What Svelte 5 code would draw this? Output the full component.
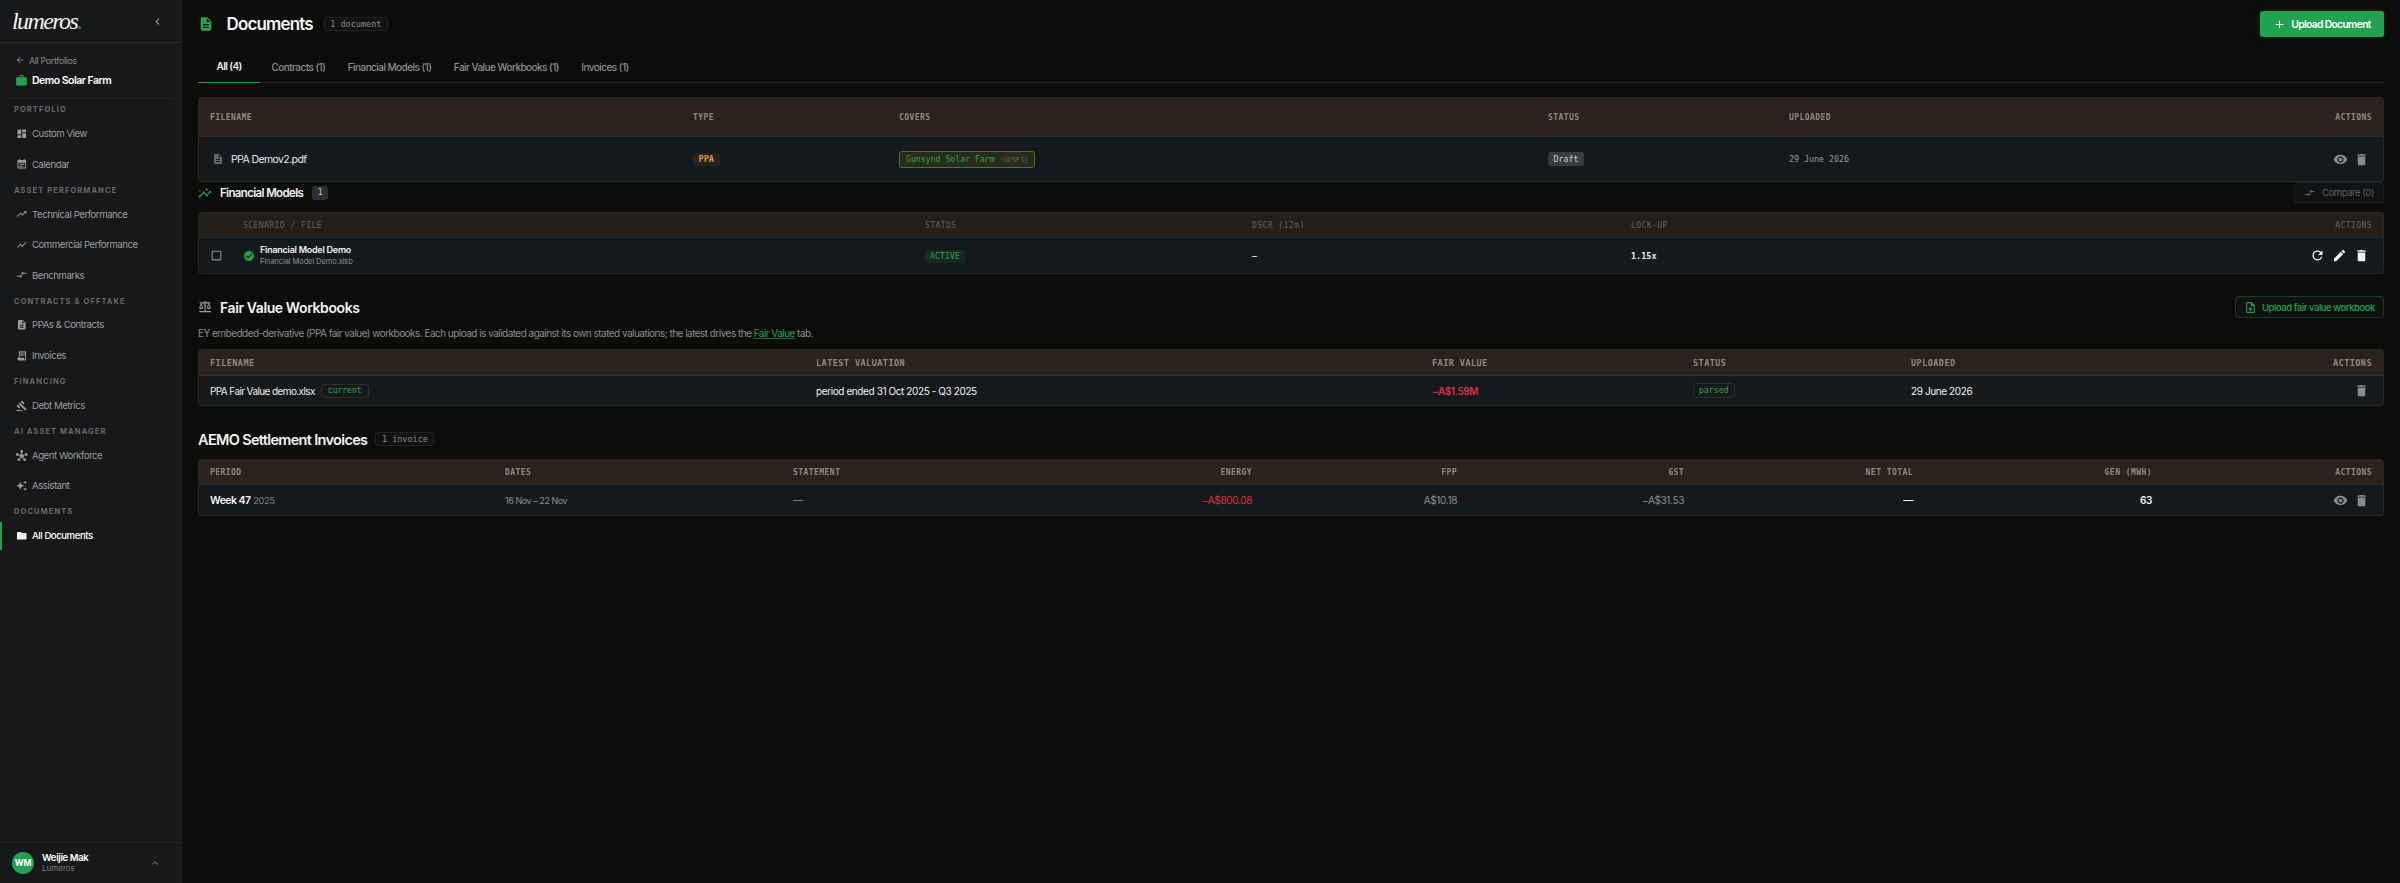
<script>
  const P = {
    left: 'M15.41 7.41 14 6l-6 6 6 6 1.41-1.41L10.83 12z',
    back: 'M20 11H7.83l5.59-5.59L12 4l-8 8 8 8 1.41-1.41L7.83 13H20v-2z',
    work: 'M20 6h-4V4c0-1.11-.89-2-2-2h-4c-1.11 0-2 .89-2 2v2H4c-1.11 0-1.99.89-1.99 2L2 19c0 1.11.89 2 2 2h16c1.11 0 2-.89 2-2V8c0-1.11-.89-2-2-2zm-6 0h-4V4h4v2z',
    dash: 'M3 13h8V3H3v10zm0 8h8v-6H3v6zm10 0h8V11h-8v10zm0-18v6h8V3h-8z',
    cal: 'M19 4h-1V2h-2v2H8V2H6v2H5c-1.1 0-2 .9-2 2v14c0 1.1.9 2 2 2h14c1.1 0 2-.9 2-2V6c0-1.1-.9-2-2-2zm0 16H5V10h14v10zM7 12h10v2H7zm0 4h7v2H7z',
    trend: 'M16 6l2.29 2.29-4.88 4.88-4-4L2 16.59 3.41 18l6-6 4 4 6.3-6.29L22 12V6z',
    chart: 'M3.5 18.49l6-6.01 4 4L22 6.92l-1.41-1.41-7.09 7.97-4-4L2 16.99z',
    insights: 'M21 8c-1.45 0-2.26 1.44-1.93 2.51l-3.55 3.56c-.3-.09-.74-.09-1.04 0l-2.55-2.55C12.27 10.45 11.46 9 10 9c-1.45 0-2.27 1.44-1.93 2.52l-4.56 4.55C2.44 15.74 1 16.55 1 18c0 1.1.9 2 2 2 1.45 0 2.26-1.44 1.93-2.51l4.55-4.56c.3.09.74.09 1.04 0l2.55 2.55C12.73 16.55 13.54 18 15 18c1.45 0 2.27-1.44 1.93-2.52l3.56-3.55C21.56 12.26 23 11.45 23 10c0-1.1-.9-2-2-2zM15 9l.94-2.07L18 6l-2.06-.93L15 3l-.92 2.07L12 6l2.08.93zM3.5 11 4 9l2-.5L4 8l-.5-2L3 8l-2 .5L3 9z',
    cmp: 'M9.01 14H2v2h7.01v3L13 15l-3.99-4v3zm5.98-1v-3H22V8h-7.01V5L11 9l3.99 4z',
    doc: 'M14 2H6c-1.1 0-1.99.9-1.99 2L4 20c0 1.1.89 2 1.99 2H18c1.1 0 2-.9 2-2V8l-6-6zm2 16H8v-2h8v2zm0-4H8v-2h8v2zm-3-5V3.5L18.5 9H13z',
    rcpt: 'M19.5 3.5 18 2l-1.5 1.5L15 2l-1.5 1.5L12 2l-1.5 1.5L9 2 7.5 3.5 6 2v14H3v3c0 1.66 1.34 3 3 3h12c1.66 0 3-1.34 3-3V2l-1.5 1.5zM19 19c0 .55-.45 1-1 1s-1-.45-1-1v-3H8V5h11v14zM9 7h6v2H9zm7 0h2v2h-2zM9 10h6v2H9zm7 0h2v2h-2z',
    gavel: 'M1 21h12v2H1v-2zM5.245 8.07l2.83-2.827 14.14 14.142-2.828 2.828L5.245 8.07zM12.317 1l5.657 5.656-2.83 2.83-5.654-5.66L12.317 1zM3.825 9.485l5.657 5.657-2.828 2.828-5.657-5.657 2.828-2.828z',
    hub: 'M8.4 18.2c.38.5.6 1.12.6 1.8 0 1.66-1.34 3-3 3s-3-1.34-3-3 1.34-3 3-3c.44 0 .85.09 1.23.26l1.41-1.77c-.92-1.03-1.29-2.39-1.09-3.69l-2.03-.68c-.54.83-1.46 1.38-2.52 1.38-1.66 0-3-1.34-3-3s1.34-3 3-3 3 1.34 3 3c0 .07 0 .14-.01.21l2.03.68c.64-1.21 1.82-2.09 3.22-2.32V5.91C9.96 5.57 9 4.4 9 3c0-1.66 1.34-3 3-3s3 1.34 3 3c0 1.4-.96 2.57-2.25 2.91v2.16c1.4.23 2.58 1.11 3.22 2.32l2.03-.68C18 9.64 18 9.57 18 9.5c0-1.66 1.34-3 3-3s3 1.34 3 3-1.34 3-3 3c-1.06 0-1.98-.55-2.52-1.38l-2.03.68c.2 1.29-.16 2.65-1.09 3.69l1.41 1.77c.38-.17.79-.26 1.23-.26 1.66 0 3 1.34 3 3s-1.34 3-3 3-3-1.34-3-3c0-.68.22-1.3.6-1.8l-1.41-1.77c-1.35.75-3.01.76-4.37 0L8.4 18.2z',
    spark: 'M19 9l1.25-2.75L23 5l-2.75-1.25L19 1l-1.25 2.75L15 5l2.75 1.25L19 9zm-7.5.5L9 4 6.5 9.5 1 12l5.5 2.5L9 20l2.5-5.5L17 12l-5.5-2.5zM19 15l-1.25 2.75L15 19l2.75 1.25L19 23l1.25-2.75L23 19l-2.75-1.25L19 15z',
    folder: 'M10 4H4c-1.1 0-1.99.9-1.99 2L2 18c0 1.1.9 2 2 2h16c1.1 0 2-.9 2-2V8c0-1.1-.9-2-2-2h-8l-2-2z',
    add: 'M19 13h-6v6h-2v-6H5v-2h6V5h2v6h6v2z',
    eye: 'M12 4.5C7 4.5 2.73 7.61 1 12c1.73 4.39 6 7.5 11 7.5s9.27-3.11 11-7.5c-1.73-4.39-6-7.5-11-7.5zM12 17c-2.76 0-5-2.24-5-5s2.24-5 5-5 5 2.24 5 5-2.24 5-5 5zm0-8c-1.66 0-3 1.34-3 3s1.34 3 3 3 3-1.34 3-3-1.34-3-3-3z',
    del: 'M6 19c0 1.1.9 2 2 2h8c1.1 0 2-.9 2-2V7H6v12zM19 4h-3.5l-1-1h-5l-1 1H5v2h14V4z',
    refresh: 'M17.65 6.35C16.2 4.9 14.21 4 12 4c-4.42 0-7.99 3.58-7.99 8s3.57 8 7.99 8c3.73 0 6.84-2.55 7.73-6h-2.08c-.82 2.33-3.04 4-5.65 4-3.31 0-6-2.69-6-6s2.69-6 6-6c1.66 0 3.14.69 4.22 1.78L13 11h7V4l-2.35 2.35z',
    edit: 'M3 17.25V21h3.75L17.81 9.94l-3.75-3.75L3 17.25zM20.71 7.04c.39-.39.39-1.02 0-1.41l-2.34-2.34c-.39-.39-1.02-.39-1.41 0l-1.83 1.83 3.75 3.75 1.83-1.83z',
    check: 'M12 2C6.48 2 2 6.48 2 12s4.48 10 10 10 10-4.48 10-10S17.52 2 12 2zm-2 15l-5-5 1.41-1.41L10 14.17l7.59-7.59L19 8l-9 9z',
    box: 'M19 5v14H5V5h14m0-2H5c-1.1 0-2 .9-2 2v14c0 1.1.9 2 2 2h14c1.1 0 2-.9 2-2V5c0-1.1-.9-2-2-2z',
    scale: 'M13 7.83c.85-.3 1.53-.98 1.83-1.83H18l-3 7c0 1.66 1.57 3 3.5 3s3.5-1.34 3.5-3l-3-7h2V4h-6.17c-.41-1.17-1.52-2-2.83-2s-2.42.83-2.83 2H3v2h2l-3 7c0 1.66 1.57 3 3.5 3S9 14.66 9 13L6 6h3.17c.3.85.98 1.53 1.83 1.83V19H2v2h20v-2h-9V7.83zM20.37 13h-3.74l1.87-4.36L20.37 13zm-13 0H3.63L5.5 8.64 7.37 13zM12 6c-.55 0-1-.45-1-1s.45-1 1-1 1 .45 1 1-.45 1-1 1z',
    upload: 'M14 2H6c-1.1 0-1.99.9-1.99 2L4 20c0 1.1.89 2 1.99 2H18c1.1 0 2-.9 2-2V8l-6-6zm4 18H6V4h7v5h5v11zM8 15.01l1.41 1.41L11 14.84V19h2v-4.16l1.59 1.59L16 15.01 12.01 11 8 15.01z',
    up: 'M12 8l-6 6 1.41 1.41L12 10.83l4.59 4.58L18 14z'
  };

  const nav = [
    { label: 'PORTFOLIO', items: [{ t: 'Custom View', i: 'dash' }, { t: 'Calendar', i: 'cal' }] },
    { label: 'ASSET PERFORMANCE', items: [{ t: 'Technical Performance', i: 'trend' }, { t: 'Commercial Performance', i: 'chart' }, { t: 'Benchmarks', i: 'cmp' }] },
    { label: 'CONTRACTS & OFFTAKE', items: [{ t: 'PPAs & Contracts', i: 'doc' }, { t: 'Invoices', i: 'rcpt' }] },
    { label: 'FINANCING', items: [{ t: 'Debt Metrics', i: 'gavel' }] },
    { label: 'AI ASSET MANAGER', items: [{ t: 'Agent Workforce', i: 'hub' }, { t: 'Assistant', i: 'spark' }] },
    { label: 'DOCUMENTS', items: [{ t: 'All Documents', i: 'folder', active: true }] }
  ];
  const tabs = ['All (4)', 'Contracts (1)', 'Financial Models (1)', 'Fair Value Workbooks (1)', 'Invoices (1)'];
</script>

{#snippet icon(name, cls = '')}
  <svg class={'ic ' + cls} viewBox="0 0 24 24" aria-hidden="true"><path d={P[name]} /></svg>
{/snippet}

<div class="app">
  <aside class="side">
    <div class="brand">
      <span class="logo">lumeros<span class="dot">.</span></span>
      {@render icon('left', 'collapse')}
    </div>
    <div class="ctx">
      <div class="backlink">{@render icon('back')}<span>All Portfolios</span></div>
      <div class="farm">{@render icon('work')}<span>Demo Solar Farm</span></div>
    </div>
    <nav class="nav">
      {#each nav as g}
        <div class="glabel">{g.label}</div>
        {#each g.items as it}
          <div class="item" class:active={it.active}>{@render icon(it.i)}<span>{it.t}</span></div>
        {/each}
      {/each}
    </nav>
    <div class="user">
      <div class="avatar">WM</div>
      <div class="who"><div class="name">Weijie Mak</div><div class="org">Lumeros</div></div>
      {@render icon('up')}
    </div>
  </aside>

  <main class="main">
    <header class="head">
      {@render icon('doc', 'headicon')}
      <h1>Documents</h1>
      <span class="pill">1 document</span>
      <button class="primary">{@render icon('add')}Upload Document</button>
    </header>

    <div class="tabs">
      {#each tabs as t, i}
        <div class="tab" class:on={i === 0}>{t}</div>
      {/each}
    </div>

    <section class="tbl t1">
      <div class="row hd">
        <div>FILENAME</div><div>TYPE</div><div>COVERS</div><div>STATUS</div><div>UPLOADED</div><div class="r">ACTIONS</div>
      </div>
      <div class="row bd">
        <div class="file">{@render icon('doc')}<span>PPA Demov2.pdf</span></div>
        <div><span class="tag-ppa">PPA</span></div>
        <div><span class="covers">Gunsynd Solar Farm <em>(GUSF1)</em></span></div>
        <div><span class="draft">Draft</span></div>
        <div class="mono-cell">29 June 2026</div>
        <div class="acts">{@render icon('eye')}{@render icon('del')}</div>
      </div>
    </section>

    <div class="fm-head">
      {@render icon('insights', 'green')}
      <h3>Financial Models</h3>
      <span class="count">1</span>
      <button class="compare">{@render icon('cmp')}Compare (0)</button>
    </div>

    <section class="tbl t2">
      <div class="row hd">
        <div></div><div>SCENARIO / FILE</div><div>STATUS</div><div>DSCR (12m)</div><div>LOCK-UP</div><div class="r">ACTIONS</div>
      </div>
      <div class="row bd">
        <div class="cb">{@render icon('box')}</div>
        <div class="scen">
          {@render icon('check')}
          <div><div class="s1">Financial Model Demo</div><div class="s2">Financial Model Demo.xlsb</div></div>
        </div>
        <div><span class="active-tag">ACTIVE</span></div>
        <div class="white">–</div>
        <div class="lock">1.15x</div>
        <div class="acts bright">{@render icon('refresh')}{@render icon('edit')}{@render icon('del')}</div>
      </div>
    </section>

    <div class="fv-head">
      {@render icon('scale')}
      <h2>Fair Value Workbooks</h2>
      <button class="outline">{@render icon('upload')}Upload fair value workbook</button>
    </div>
    <p class="desc">EY embedded-derivative (PPA fair value) workbooks. Each upload is validated against its own stated valuations; the latest drives the <a href="#fv">Fair Value</a> tab.</p>

    <section class="tbl t3">
      <div class="row hd">
        <div>FILENAME</div><div>LATEST VALUATION</div><div>FAIR VALUE</div><div>STATUS</div><div>UPLOADED</div><div class="r">ACTIONS</div>
      </div>
      <div class="row bd">
        <div class="fvname">PPA Fair Value demo.xlsx <span class="current">current</span></div>
        <div class="white">period ended 31 Oct 2025 - Q3 2025</div>
        <div class="neg strong">−A$1.59M</div>
        <div><span class="parsed">parsed</span></div>
        <div class="white">29 June 2026</div>
        <div class="acts">{@render icon('del')}</div>
      </div>
    </section>

    <div class="inv-head">
      <h2>AEMO Settlement Invoices</h2>
      <span class="pill">1 invoice</span>
    </div>

    <section class="tbl t4">
      <div class="row hd">
        <div>PERIOD</div><div>DATES</div><div>STATEMENT</div><div class="r">ENERGY</div><div class="r">FPP</div><div class="r">GST</div><div class="r">NET TOTAL</div><div class="r">GEN (MWH)</div><div class="r">ACTIONS</div>
      </div>
      <div class="row bd">
        <div class="wk"><b>Week 47</b> <span>2025</span></div>
        <div class="dim date">16 Nov – 22 Nov</div>
        <div class="dim">—</div>
        <div class="r neg">−A$800.08</div>
        <div class="r dim">A$10.18</div>
        <div class="r dim">−A$31.53</div>
        <div class="r white strong">—</div>
        <div class="r white strong">63</div>
        <div class="acts">{@render icon('eye')}{@render icon('del')}</div>
      </div>
    </section>
  </main>
</div>

<style>
  :global(body) { margin: 0; background: #0c0c0b; }
  :global(*) { box-sizing: border-box; }
  .app { display: flex; height: 883px; overflow: hidden; font-family: Inter, "Noto Sans", sans-serif; color: #fff; }
  .ic { width: 12px; height: 12px; fill: currentColor; flex: none; display: block; }

  .side { width: 182px; flex: none; background: #17181a; border-right: 1px solid #232425; display: flex; flex-direction: column; }
  .brand { height: 43px; flex: none; border-bottom: 1px solid #2a2b2c; display: flex; align-items: center; justify-content: space-between; padding: 0 17px 0 12px; }
  .logo { font-family: "Liberation Serif", serif; font-style: italic; font-size: 24px; letter-spacing: -1.6px; color: #f2f2f2; line-height: 1; }
  .dot { color: #22a24f; }
  .collapse { color: #9a9a9a; width: 13px; height: 13px; }

  .ctx { margin: 0 8px; height: 56px; border-bottom: 1px solid #26272a; padding: 10px 0 0 7px; }
  .backlink { display: flex; align-items: center; gap: 4px; font-size: 9px; color: #8a8a8a; height: 14px; letter-spacing: -0.4px; }
  .backlink .ic { width: 10px; height: 10px; color: #808080; }
  .farm { display: flex; align-items: center; gap: 4px; margin-top: 7px; font-size: 10.5px; font-weight: 600; color: #fff; letter-spacing: -0.5px; }
  .farm .ic { width: 13px; height: 13px; color: #22a24f; }

  .nav { flex: 1; padding-top: 1.3px; display: flex; flex-direction: column; }
  .glabel { height: 19.4px; flex: none; padding-left: 14px; font-size: 7.5px; font-weight: 700; letter-spacing: 1.1px; color: #676869; display: flex; align-items: center; }
  .item { height: 28px; flex: none; margin-bottom: 2.5px; display: flex; align-items: center; gap: 4.5px; padding-left: 16px; font-size: 9.6px; color: #9c9d9e; letter-spacing: -0.45px; position: relative; }
  .item .ic { width: 11.5px; height: 11.5px; color: #9a9a9a; }
  .item.active { color: #fff; font-weight: 500; }
  .item.active .ic { color: #f2f2f2; }
  .item.active::before { content: ''; position: absolute; left: 0; top: 0; bottom: 0; width: 2px; background: #22a24f; }

  .user { height: 41px; flex: none; border-top: 1px solid #26272a; display: flex; align-items: center; padding: 0 20px 0 12px; }
  .avatar { width: 22px; height: 22px; border-radius: 50%; background: #22a24f; color: #fff; font-size: 8.5px; font-weight: 700; display: flex; align-items: center; justify-content: center; }
  .who { margin-left: 8px; flex: 1; }
  .name { font-size: 9.5px; font-weight: 600; letter-spacing: -0.35px; line-height: 11px; }
  .org { font-size: 8px; color: #7c7c7c; line-height: 11px; }
  .user > .ic { color: #6a6a6a; width: 12px; height: 12px; }

  .main { flex: 1; min-width: 0; padding: 0 16px 0 16px; }
  .head { height: 48px; display: flex; align-items: center; }
  .headicon { width: 16px; height: 16px; color: #22a24f; margin-right: 12.5px; }
  h1 { margin: 0; font-size: 17px; font-weight: 600; letter-spacing: -0.85px; color: #f5f5f5; }
  .pill { margin-left: 11px; font-family: "DejaVu Sans Mono", monospace; font-size: 8.5px; color: #8d8d8d; border: 1px solid #212222; background: #111211; border-radius: 3px; padding: 0 5.5px; height: 14px; display: inline-flex; align-items: center; }
  button { font-family: inherit; cursor: pointer; }
  .primary { margin-left: auto; width: 124px; height: 26px; border: 0; border-radius: 3px; background: #22a24f; color: #fff; font-size: 10.3px; font-weight: 600; letter-spacing: -0.65px; display: flex; align-items: center; justify-content: center; gap: 5px; box-shadow: 0 0 6px rgba(34,162,79,.25); }
  .primary .ic { width: 13px; height: 13px; }

  .tabs { display: flex; height: 35px; border-bottom: 1px solid #202120; }
  .tab { padding: 2px 11.2px 0; height: 35px; display: flex; align-items: center; font-size: 10px; font-weight: 500; color: #8f8f8f; letter-spacing: -0.55px; }
  .tab:first-child { padding: 2px 18.5px 0; }
  .tab.on { color: #f5f5f5; font-weight: 600; border-bottom: 1px solid #22a24f; }

  .tbl { border: 1px solid #262728; border-radius: 3px; overflow: hidden; background: #16191c; }
  .row { display: grid; align-items: center; }
  .hd { background: #2a221c; border-bottom: 1px solid #2b2d2e; font-family: "DejaVu Sans Mono", monospace; font-size: 8px; font-weight: 700; color: #8f897d; letter-spacing: 0.45px; }
  .r { text-align: right; }
  .bd { font-size: 10px; letter-spacing: -0.35px; }

  .t1 { margin-top: 14px; }
  .t1 .row { grid-template-columns: 483px 206px 649px 241px 1fr 110px; padding: 0 11px; }
  .t1 .hd { height: 39px; }
  .t1 .bd { height: 44px; }
  .file { display: flex; align-items: center; gap: 7px; color: #e8e8e8; font-size: 10.5px; letter-spacing: -0.6px; }
  .file .ic { width: 12px; height: 12px; color: #666; margin-left: 2px; }
  .tag-ppa { display: inline-block; font-family: "DejaVu Sans Mono", monospace; font-size: 8.6px; font-weight: 700; letter-spacing: 0; color: #d9963a; background: #252220; border-radius: 3px; padding: 1px 5.5px; line-height: 11px; }
  .covers { display: inline-block; font-family: "DejaVu Sans Mono", monospace; font-size: 8.2px; color: #2aa457; background: #2a2a1a; border: 1px solid #2a7d45; border-radius: 3px; padding: 2px 6px; white-space: nowrap; letter-spacing: 0; line-height: 10px; }
  .covers em { font-style: normal; color: #4e6b52; font-size: 6.8px; }
  .draft { display: inline-block; font-family: "DejaVu Sans Mono", monospace; font-size: 8.3px; letter-spacing: 0; color: #c8c8c8; background: #3a3b3d; border-radius: 3px; padding: 2px 5.5px; line-height: 10px; }
  .mono-cell { font-family: "DejaVu Sans Mono", monospace; font-size: 8.3px; letter-spacing: 0; color: #9a9a9a; }
  .acts { display: flex; justify-content: flex-end; align-items: center; gap: 6px; color: #8a8a8a; padding-right: 3px; }
  .acts .ic { width: 15px; height: 15px; }
  .acts.bright { color: #f2f2f2; gap: 7px; }

  .fm-head { height: 21px; display: flex; align-items: center; }
  .fm-head > .ic { width: 14px; height: 14px; margin-right: 8px; }
  .green { color: #22a24f; }
  h3 { margin: 0; font-size: 11.5px; font-weight: 600; letter-spacing: -0.65px; color: #f2f2f2; }
  .count { margin-left: 9px; width: 16px; height: 14px; border-radius: 3px; background: #2e2f30; color: #c9c9c9; font-family: "DejaVu Sans Mono", monospace; font-size: 8px; display: flex; align-items: center; justify-content: center; }
  .compare { margin-left: auto; width: 90px; height: 21px; border: 1px solid #1f2020; border-radius: 3px; background: #111211; color: #5f5f5f; font-size: 9.5px; display: flex; align-items: center; justify-content: center; gap: 6px; letter-spacing: -0.45px; }
  .compare .ic { width: 12px; height: 12px; }

  .t2 { margin-top: 9px; }
  .t2 .row { grid-template-columns: 33px 682px 327px 379px 1fr 110px; padding: 0 11px; }
  .t2 .hd { height: 25px; color: #656259; background: #231f1a; font-weight: 400; }
  .t2 .bd { height: 35px; }
  .cb .ic { width: 13px; height: 13px; color: #8c8c8c; }
  .scen { display: flex; align-items: center; gap: 5px; }
  .scen .ic { width: 12px; height: 12px; color: #22a24f; }
  .s1 { font-size: 9px; font-weight: 600; color: #f2f2f2; letter-spacing: -0.25px; line-height: 12px; }
  .s2 { font-size: 7.5px; color: #8e8e8e; line-height: 12px; letter-spacing: -0.1px; }
  .active-tag { display: inline-block; font-family: "DejaVu Sans Mono", monospace; font-size: 8px; color: #2aa45e; background: #132a20; border-radius: 3px; padding: 2px 5px; letter-spacing: .2px; }
  .white { color: #f2f2f2; }
  .lock { font-family: "DejaVu Sans Mono", monospace; font-size: 8.5px; letter-spacing: 0; font-weight: 700; color: #e8e8e8; }

  .fv-head { margin-top: 21px; height: 24px; display: flex; align-items: center; }
  .fv-head > .ic { width: 14px; height: 14px; color: #9a9a9a; margin-right: 8px; }
  h2 { margin: 0; font-size: 14px; font-weight: 600; letter-spacing: -0.4px; color: #f5f5f5; }
  .outline { margin-left: auto; width: 149px; height: 22px; border: 1px solid #173a25; border-radius: 3px; background: #0f1210; color: #22a24f; font-size: 9.5px; font-weight: 500; letter-spacing: -0.45px; display: flex; align-items: center; justify-content: center; gap: 5px; white-space: nowrap; padding: 0; }
  .outline .ic { width: 13px; height: 13px; }
  .desc { margin: 7px 0 0; height: 14px; line-height: 14px; font-size: 10px; color: #8c8c8c; letter-spacing: -0.53px; }
  .desc a { color: #22a24f; text-decoration-color: #1a6b37; }

  .t3 { margin-top: 9px; }
  .t3 .row { grid-template-columns: 606px 616px 261px 218px 1fr 110px; padding: 0 11px; }
  .t3 .hd { height: 26px; font-size: 8.5px; }
  .t3 .bd { height: 29px; font-size: 10px; letter-spacing: -0.4px; }
  .fvname { color: #ececec; display: flex; align-items: center; gap: 6px; letter-spacing: -0.6px; }
  .current { font-family: "DejaVu Sans Mono", monospace; font-size: 8px; color: #2aa457; background: #161a1d; border: 1px solid #2a2f2c; border-radius: 3px; padding: 0 6px; line-height: 12px; letter-spacing: 0; }
  .neg { color: #dc2f47; }
  .strong { font-weight: 600; }
  .parsed { display: inline-block; font-family: "DejaVu Sans Mono", monospace; font-size: 8.2px; color: #2aa457; background: #161a1d; border: 1px solid #2a2d30; border-radius: 3px; padding: 0 5px; line-height: 13px; letter-spacing: 0; }

  .inv-head { margin-top: 23px; height: 20px; display: flex; align-items: center; }
  .inv-head .pill { margin-left: 8px; }
  .inv-head h2 { font-size: 14.5px; letter-spacing: -0.67px; }

  .t4 { margin-top: 10px; }
  .t4 .row { grid-template-columns: 295px 288px 230px 229px 205px 227px 229px 239px 1fr; padding: 0 11px; }
  .t4 .hd { height: 25px; }
  .t4 .bd { height: 30px; font-size: 10px; }
  .wk b { font-weight: 600; color: #f2f2f2; font-size: 10.5px; letter-spacing: -0.55px; }
  .wk span { color: #7c7c7c; font-size: 9.5px; letter-spacing: -0.4px; }
  .dim { color: #8d8d8d; }
  .date { font-size: 9px; letter-spacing: -0.45px; }
</style>
